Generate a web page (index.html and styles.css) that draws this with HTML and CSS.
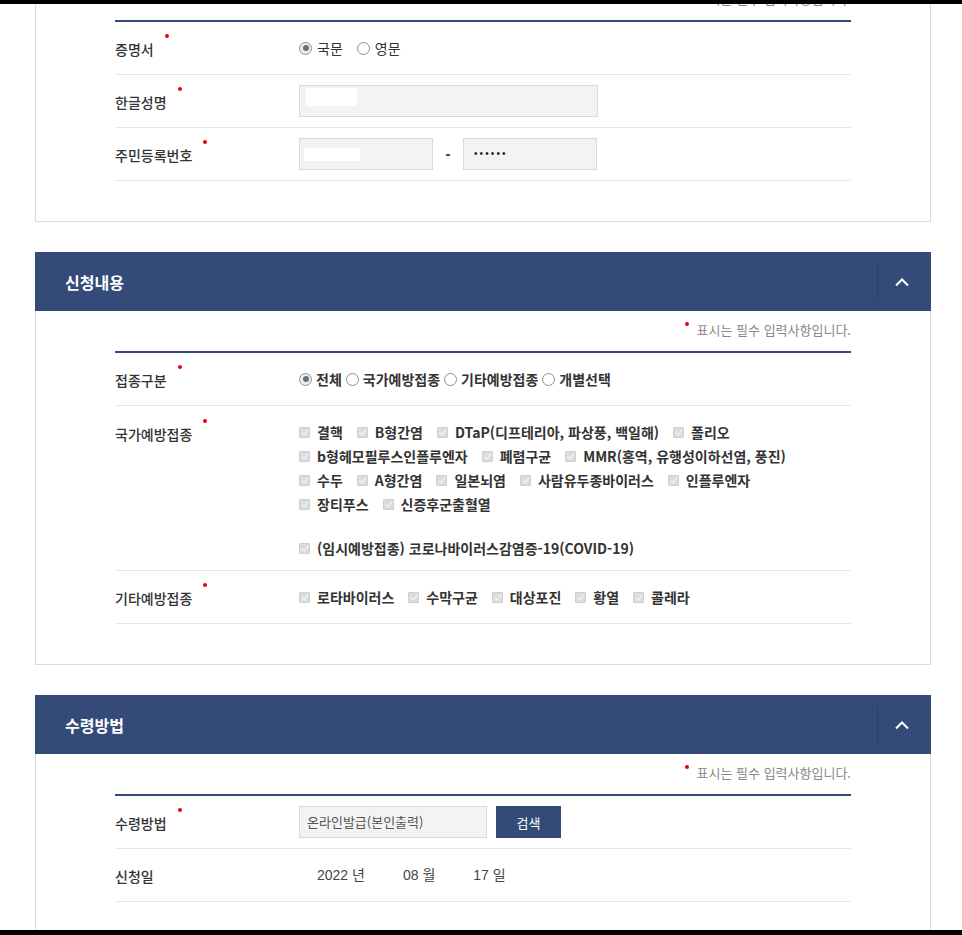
FILE: index.html
```html
<!DOCTYPE html>
<html lang="ko">
<head>
<meta charset="utf-8">
<title>예방접종증명서 신청</title>
<link rel="stylesheet" href="styles.css">
</head>
<body>
<div class="page">

  <section class="card card-first">
    <div class="card-body">
      <p class="req-note"><span class="req-dot"></span>표시는 필수 입력사항입니다.</p>
      <div class="form">
        <div class="row">
          <div class="label">증명서<span class="req"></span></div>
          <div class="value">
            <span class="opt"><span class="radio on"></span>국문</span>
            <span class="opt"><span class="radio"></span>영문</span>
          </div>
        </div>
        <div class="row">
          <div class="label">한글성명<span class="req"></span></div>
          <div class="value">
            <div class="field field-name"><span class="mask mask-name"></span></div>
          </div>
        </div>
        <div class="row">
          <div class="label">주민등록번호<span class="req"></span></div>
          <div class="value">
            <div class="field field-rrn"><span class="mask mask-rrn"></span></div>
            <span class="dash">-</span>
            <div class="field field-rrn"><span class="dots">••••••</span></div>
          </div>
        </div>
      </div>
    </div>
  </section>

  <section class="card">
    <header class="card-head">
      <h2 class="card-title">신청내용</h2>
      <span class="toggle"><svg width="16" height="10" viewBox="0 0 16 10"><polyline points="2,8.5 8,2.5 14,8.5" fill="none" stroke="#fff" stroke-width="2"/></svg></span>
    </header>
    <div class="card-body">
      <p class="req-note"><span class="req-dot"></span>표시는 필수 입력사항입니다.</p>
      <div class="form">
        <div class="row">
          <div class="label">접종구분<span class="req"></span></div>
          <div class="value bold tight">
            <span class="opt"><span class="radio on"></span>전체</span>
            <span class="opt"><span class="radio"></span>국가예방접종</span>
            <span class="opt"><span class="radio"></span>기타예방접종</span>
            <span class="opt"><span class="radio"></span>개별선택</span>
          </div>
        </div>
        <div class="row row-multi">
          <div class="label">국가예방접종<span class="req"></span></div>
          <div class="value-list bold">
            <div class="line">
              <span class="chk"><span class="cb"></span>결핵</span>
              <span class="chk"><span class="cb"></span>B형간염</span>
              <span class="chk"><span class="cb"></span>DTaP(디프테리아, 파상풍, 백일해)</span>
              <span class="chk"><span class="cb"></span>폴리오</span>
            </div>
            <div class="line">
              <span class="chk"><span class="cb"></span>b형헤모필루스인플루엔자</span>
              <span class="chk"><span class="cb"></span>폐렴구균</span>
              <span class="chk"><span class="cb"></span>MMR(홍역, 유행성이하선염, 풍진)</span>
            </div>
            <div class="line">
              <span class="chk"><span class="cb"></span>수두</span>
              <span class="chk"><span class="cb"></span>A형간염</span>
              <span class="chk"><span class="cb"></span>일본뇌염</span>
              <span class="chk"><span class="cb"></span>사람유두종바이러스</span>
              <span class="chk"><span class="cb"></span>인플루엔자</span>
            </div>
            <div class="line">
              <span class="chk"><span class="cb"></span>장티푸스</span>
              <span class="chk"><span class="cb"></span>신증후군출혈열</span>
            </div>
            <div class="line-gap"></div>
            <div class="line">
              <span class="chk"><span class="cb"></span>(임시예방접종) 코로나바이러스감염증-19(COVID-19)</span>
            </div>
          </div>
        </div>
        <div class="row">
          <div class="label">기타예방접종<span class="req"></span></div>
          <div class="value bold">
            <span class="chk"><span class="cb"></span>로타바이러스</span>
            <span class="chk"><span class="cb"></span>수막구균</span>
            <span class="chk"><span class="cb"></span>대상포진</span>
            <span class="chk"><span class="cb"></span>황열</span>
            <span class="chk"><span class="cb"></span>콜레라</span>
          </div>
        </div>
      </div>
    </div>
  </section>

  <section class="card">
    <header class="card-head">
      <h2 class="card-title">수령방법</h2>
      <span class="toggle"><svg width="16" height="10" viewBox="0 0 16 10"><polyline points="2,8.5 8,2.5 14,8.5" fill="none" stroke="#fff" stroke-width="2"/></svg></span>
    </header>
    <div class="card-body">
      <p class="req-note"><span class="req-dot"></span>표시는 필수 입력사항입니다.</p>
      <div class="form">
        <div class="row">
          <div class="label">수령방법<span class="req"></span></div>
          <div class="value">
            <div class="field field-select">온라인발급(본인출력)</div>
            <button class="btn" type="button">검색</button>
          </div>
        </div>
        <div class="row">
          <div class="label">신청일</div>
          <div class="value date">
            <span>2022 년</span>
            <span>08 월</span>
            <span>17 일</span>
          </div>
        </div>
      </div>
    </div>
  </section>

</div>
<div class="frame frame-top"></div>
<div class="frame frame-bottom"></div>
</body>
</html>
```

FILE: styles.css
```css
html, body {
  margin: 0;
  padding: 0;
  background: #fff;
}

body {
  font-family: "Noto Sans CJK KR", "Noto Sans", sans-serif;
  font-size: 14px;
  color: #333;
  overflow: hidden;
}

.page {
  padding-left: 35px;
}

.card {
  width: 896px;
  box-sizing: border-box;
  border: 1px solid #dadada;
  margin-bottom: 30px;
  background: #fff;
}

.card-first {
  margin-top: -20px;
  border-top: none;
}

.card-head {
  display: flex;
  align-items: center;
  justify-content: space-between;
  height: 59px;
  margin: -1px -1px 0;
  padding-left: 30px;
  background: #344b79;
}

.card-title {
  margin: 0;
  font-size: 16px;
  font-weight: 700;
  color: #fff;
  line-height: 24px;
}

.toggle {
  display: flex;
  align-items: center;
  justify-content: center;
  box-sizing: border-box;
  width: 54px;
  height: 40px;
  padding-right: 6px;
  border-left: 1px solid #2d416b;
}

.card-body {
  padding: 10px 79px 40px;
}

.req-note {
  margin: 0 0 12px;
  text-align: right;
  font-size: 13px;
  line-height: 18px;
  color: #888;
}

.req-dot {
  display: inline-block;
  width: 4px;
  height: 4px;
  border-radius: 50%;
  background: #e60012;
  vertical-align: top;
  margin: 1px 8px 0 0;
}

.form {
  border-top: 2px solid #34497a;
}

.row {
  display: grid;
  grid-template-columns: 184px 1fr;
  align-items: center;
  min-height: 52px;
  border-bottom: 1px solid #e8e8e8;
}

.row-multi {
  align-items: start;
  padding: 14px 0 10px;
}

.label {
  font-size: 14px;
  font-weight: 500;
  line-height: 24px;
  color: #333;
  white-space: nowrap;
  padding-top: 2px;
}

.req {
  display: inline-block;
  width: 4px;
  height: 4px;
  border-radius: 50%;
  background: #e60012;
  vertical-align: top;
  margin: -3px 0 0 11px;
}

.value {
  display: flex;
  align-items: center;
  line-height: 24px;
  white-space: nowrap;
}

.bold {
  font-weight: 700;
  color: #333;
}

.opt {
  display: inline-flex;
  align-items: center;
  margin-right: 14px;
}

.tight .opt {
  margin-right: 4px;
}

.radio {
  display: inline-block;
  box-sizing: border-box;
  width: 13px;
  height: 13px;
  border: 1px solid #8f8f8f;
  border-radius: 50%;
  background: #fff;
  margin-right: 5px;
  position: relative;
}

.tight .radio {
  margin-right: 4px;
}

.radio.on {
  background: #f0f0f0;
}

.radio.on::after {
  content: "";
  position: absolute;
  left: 2.5px;
  top: 2.5px;
  width: 6px;
  height: 6px;
  border-radius: 50%;
  background: #6e6e6e;
}

.value-list .line {
  display: flex;
  align-items: center;
  height: 24px;
  line-height: 24px;
  white-space: nowrap;
}

.line-gap {
  height: 20px;
}

.chk {
  display: inline-flex;
  align-items: center;
  margin-right: 14px;
}

.cb {
  display: inline-block;
  width: 11px;
  height: 11px;
  box-sizing: border-box;
  border: 1px solid #cfcfcf;
  border-radius: 1px;
  background: #dcdcdc;
  margin-right: 7px;
  position: relative;
}

.cb::after {
  content: "";
  position: absolute;
  left: 3px;
  top: 0px;
  width: 3px;
  height: 6px;
  border: solid #f7f7f7;
  border-width: 0 1.5px 1.5px 0;
  transform: rotate(40deg);
}

.field {
  box-sizing: border-box;
  height: 32px;
  background: #f3f3f3;
  border: 1px solid #d9d9d9;
  display: flex;
  align-items: center;
}

.field-name {
  width: 299px;
  padding: 0 6px;
  align-items: flex-start;
  padding-top: 2px;
}

.mask {
  display: block;
  background: #fff;
}

.mask-name {
  width: 51px;
  height: 18px;
}

.field-rrn {
  width: 134px;
  padding: 0 4px;
}

.mask-rrn {
  width: 56px;
  height: 13px;
}

.dash {
  width: 30px;
  text-align: center;
  font-weight: 700;
  color: #333;
  font-family: "Liberation Sans", sans-serif;
  font-size: 15px;
}

.dots {
  font-family: "Liberation Sans", sans-serif;
  font-size: 10px;
  letter-spacing: 2.1px;
  color: #222;
  padding-left: 6px;
}

.field-select {
  width: 188px;
  padding: 0 7px;
  font-size: 13px;
  color: #555;
}

.btn {
  margin-left: 9px;
  width: 65px;
  height: 32px;
  border: none;
  background: #344b79;
  color: #fff;
  font-family: "Noto Sans CJK KR", sans-serif;
  font-size: 13px;
  padding: 0;
}

.date {
  padding-left: 18px;
  gap: 38px;
  font-family: "Liberation Sans", "Noto Sans CJK KR", sans-serif;
  color: #444;
}

.frame {
  position: fixed;
  left: 0;
  right: 0;
  background: #000;
}

.frame-top {
  top: 0;
  height: 4px;
}

.frame-bottom {
  bottom: 0;
  height: 5px;
}
```
